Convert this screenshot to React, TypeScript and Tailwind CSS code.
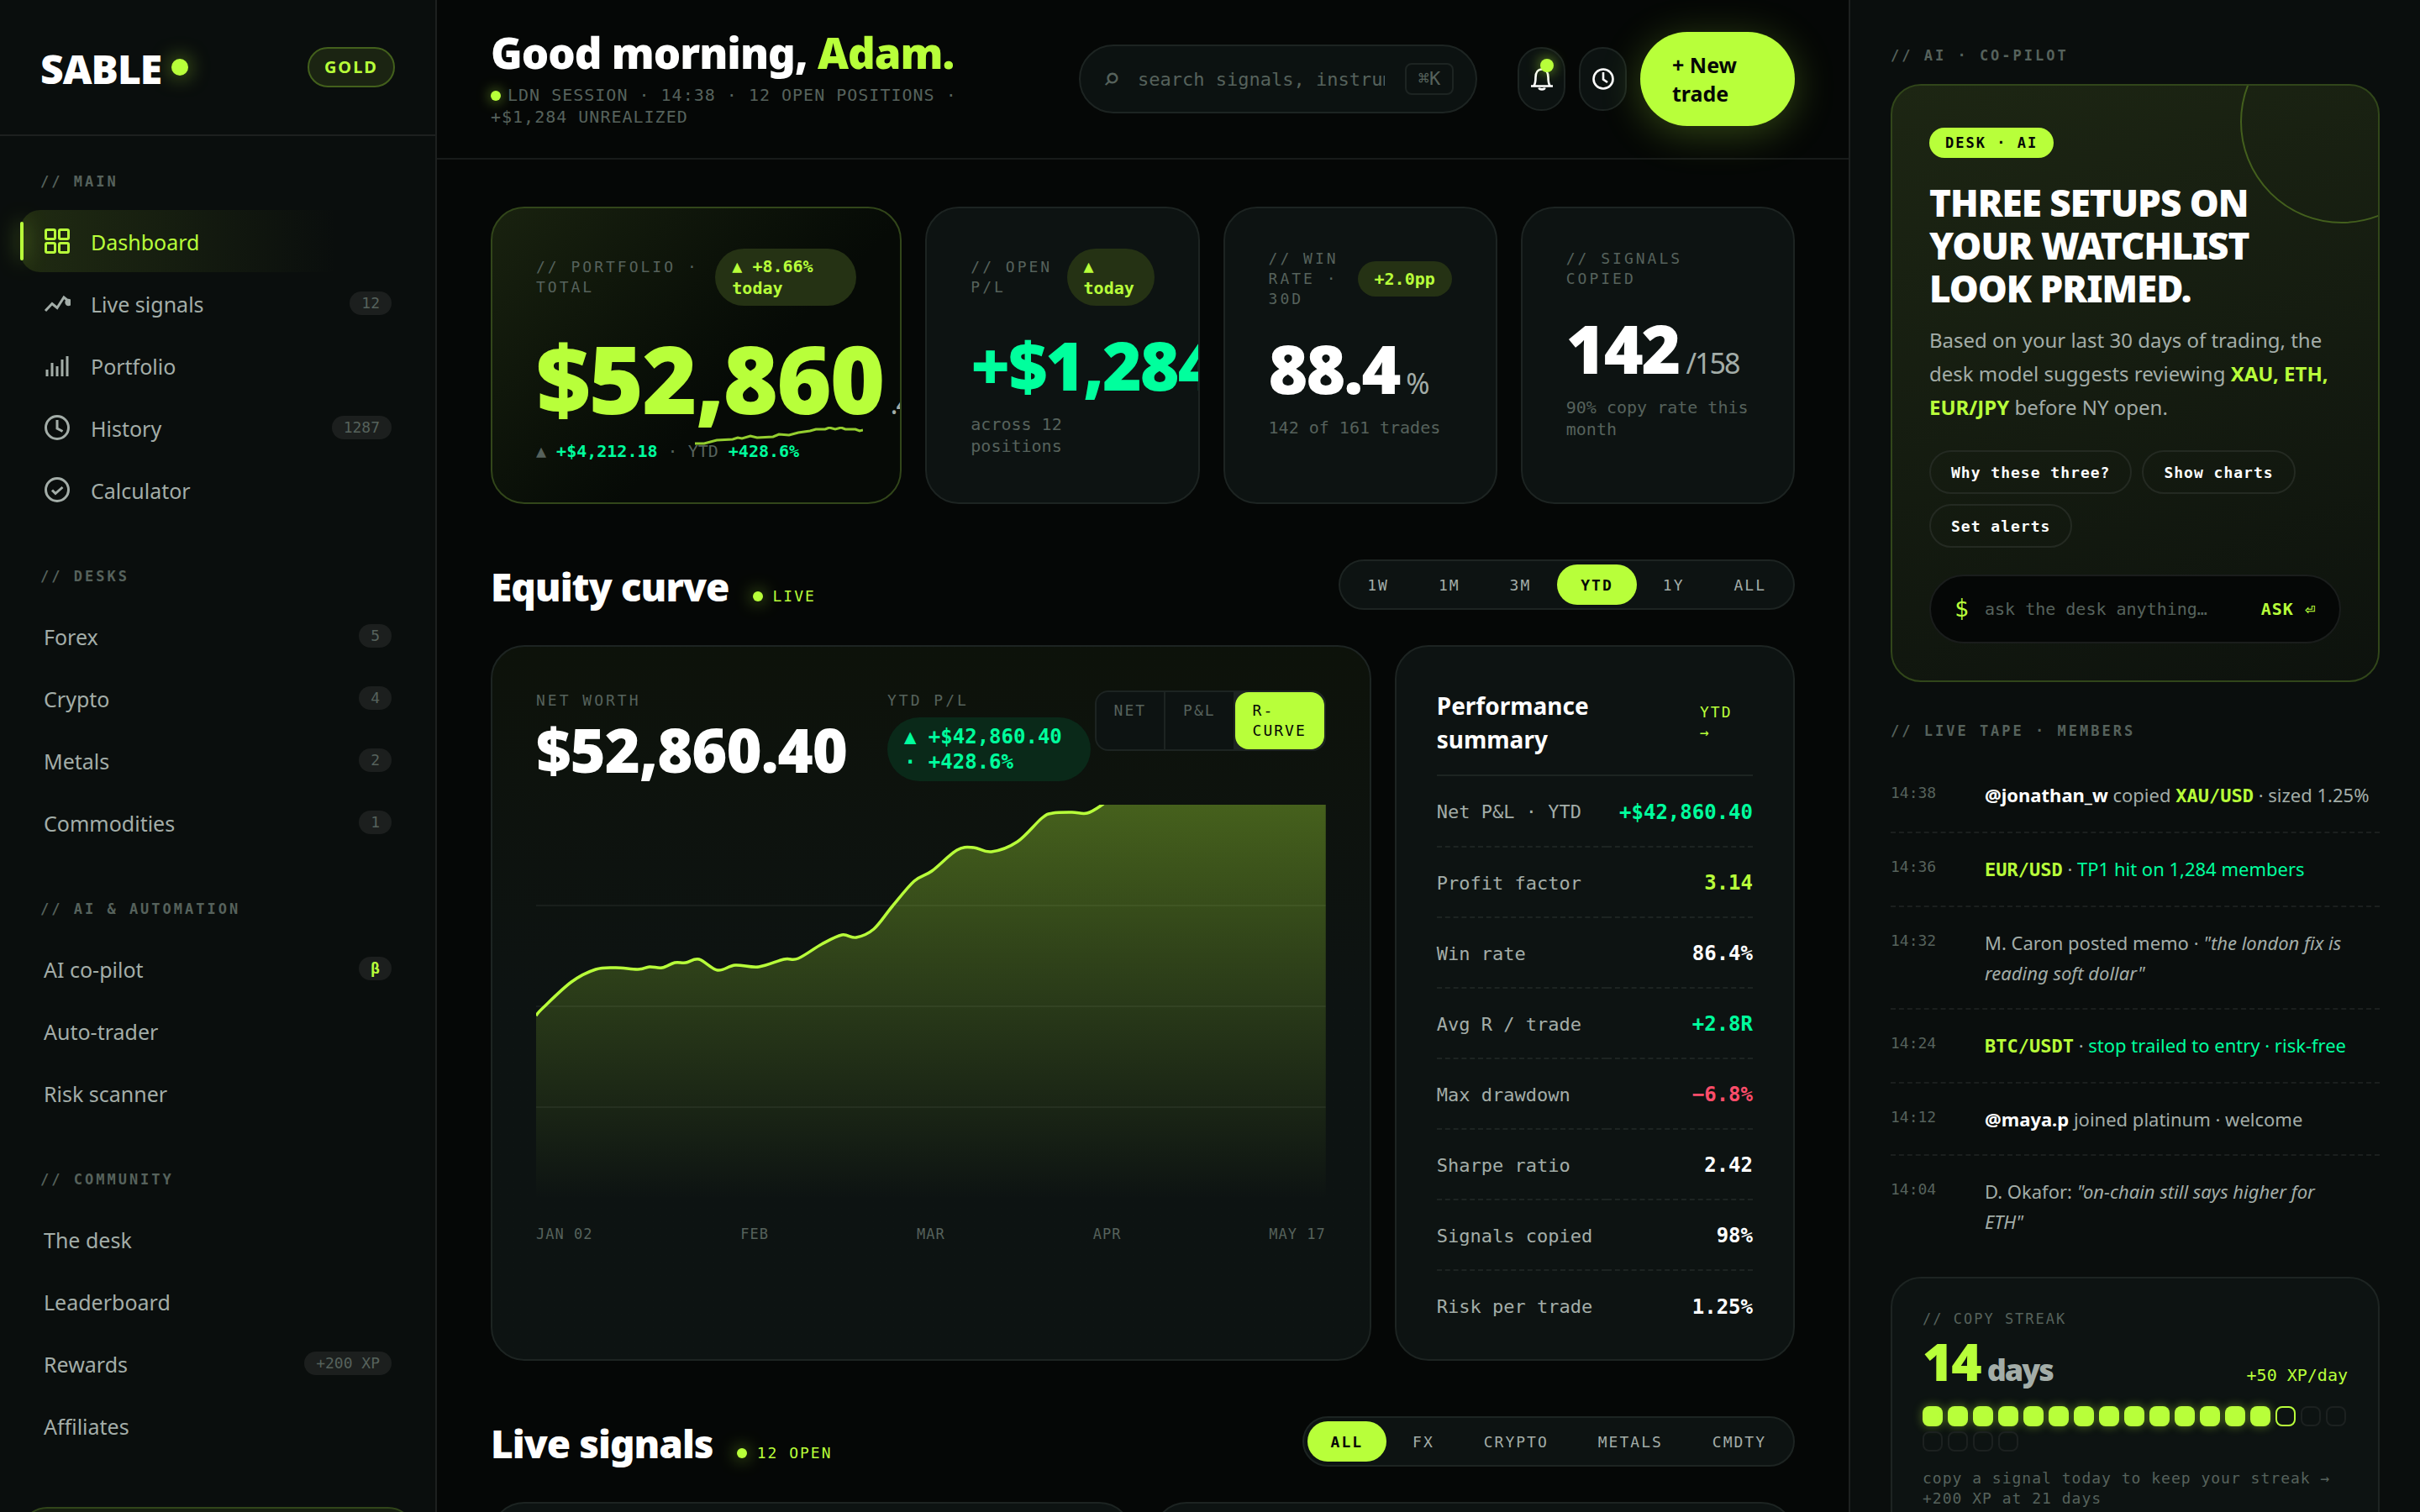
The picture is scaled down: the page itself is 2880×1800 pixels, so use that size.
import React from 'react';

const mono = "font-['DejaVu_Sans_Mono','Liberation_Mono',monospace]";

interface NavItem {
  label: string;
  icon?: React.ReactNode;
  badge?: string;
  badgeLime?: boolean;
  active?: boolean;
}

const iconProps = {
  viewBox: '0 0 32 32',
  fill: 'none',
  stroke: 'currentColor',
  strokeWidth: 3,
  className: 'w-8 h-8 shrink-0',
  'aria-hidden': true,
};

const GridIcon = () => (
  <svg {...iconProps}>
    <rect x="2.5" y="2.5" width="11" height="11" rx="1.5" />
    <rect x="18.5" y="2.5" width="11" height="11" rx="1.5" />
    <rect x="2.5" y="18.5" width="11" height="11" rx="1.5" />
    <rect x="18.5" y="18.5" width="11" height="11" rx="1.5" />
  </svg>
);

const TrendIcon = () => (
  <svg {...iconProps}>
    <path d="M2 25 L10 16.5 L16 21.5 L24 9 L29 13" />
    <circle cx="29.5" cy="15" r="4.2" fill="currentColor" stroke="none" />
  </svg>
);

const BarsIcon = () => (
  <svg {...iconProps}>
    <path d="M4 29V21M10 29V13M16 29V17M22 29V9M28 29V5" />
  </svg>
);

const HistoryIcon = () => (
  <svg {...iconProps}>
    <circle cx="16" cy="16" r="13.5" />
    <path d="M16 7V17L22.5 20.5" />
  </svg>
);

const CheckIcon = () => (
  <svg {...iconProps}>
    <circle cx="16" cy="16" r="13.5" />
    <path d="M10 16.5L14 20.5L22.5 13" />
  </svg>
);

const navGroups: { title: string; items: NavItem[] }[] = [
  {
    title: '// MAIN',
    items: [
      { label: 'Dashboard', icon: <GridIcon />, active: true },
      { label: 'Live signals', icon: <TrendIcon />, badge: '12' },
      { label: 'Portfolio', icon: <BarsIcon /> },
      { label: 'History', icon: <HistoryIcon />, badge: '1287' },
      { label: 'Calculator', icon: <CheckIcon /> },
    ],
  },
  {
    title: '// DESKS',
    items: [
      { label: 'Forex', badge: '5' },
      { label: 'Crypto', badge: '4' },
      { label: 'Metals', badge: '2' },
      { label: 'Commodities', badge: '1' },
    ],
  },
  {
    title: '// AI & AUTOMATION',
    items: [
      { label: 'AI co-pilot', badge: 'β', badgeLime: true },
      { label: 'Auto-trader' },
      { label: 'Risk scanner' },
    ],
  },
  {
    title: '// COMMUNITY',
    items: [
      { label: 'The desk' },
      { label: 'Leaderboard' },
      { label: 'Rewards', badge: '+200 XP' },
      { label: 'Affiliates' },
    ],
  },
];

const Sidebar = () => (
  <aside className="flex flex-col overflow-hidden bg-[#0a0e0d] border-r-2 border-[#1d201f]">
    <div className="flex items-center justify-between px-12 py-14 border-b-2 border-[#1d201f]">
      <a href="#" className="flex items-center gap-3 h-12">
        <span className="pt-1 text-[48px] leading-[48px] font-black tracking-[-1px] text-white">SABLE</span>
        <span className="w-5 h-5 rounded-full bg-[#b8ff3a] shadow-[0_0_24px_rgba(184,255,58,0.6)]" />
      </a>
      <span className="px-[18px] h-12 flex items-center rounded-full border-2 border-[#43601c] bg-[#1b2412] text-[#b8ff3a] text-[20px] font-bold tracking-[2px]">
        GOLD
      </span>
    </div>
    <nav className="px-6 pt-10">
      {navGroups.map((group) => (
        <div key={group.title} className="mb-[52px]">
          <h2 className={`${mono} pl-6 mb-5 text-[17px] leading-7 font-bold tracking-[3px] text-[#56625c]`}>
            {group.title}
          </h2>
          <ul>
            {group.items.map((item) => (
              <li key={item.label}>
                <a
                  href="#"
                  className={`relative flex items-center gap-6 h-[74px] px-7 rounded-[24px] text-[25px] ${
                    item.active
                      ? 'text-[#b8ff3a] bg-linear-to-r from-[#202b12] to-transparent to-80%'
                      : 'text-[#a3ada8]'
                  }`}
                >
                  {item.active && (
                    <span className="absolute left-0 top-[14px] bottom-[14px] w-1 rounded-sm bg-[#b8ff3a] shadow-[0_0_24px_rgba(184,255,58,0.7)]" />
                  )}
                  {item.icon}
                  <span className="pt-1">{item.label}</span>
                  {item.badge && (
                    <span
                      className={`${mono} ml-auto px-[14px] rounded-full bg-[#1c1f1e] text-[18px] leading-7 ${
                        item.badgeLime ? 'text-[#b8ff3a] font-bold' : 'text-[#56625c]'
                      }`}
                    >
                      {item.badge}
                    </span>
                  )}
                </a>
              </li>
            ))}
          </ul>
        </div>
      ))}
    </nav>
    <div className="mx-6 mt-2 h-60 shrink-0 rounded-[32px] border-2 border-[#31461a] bg-[#161e10]" />
  </aside>
);

const TopBar = () => (
  <header className="flex items-center px-16 h-[190px] border-b-2 border-[#181b1a]">
    <div className="w-[600px] shrink-0">
      <h1 className="text-[51px] leading-[52px] font-black tracking-[-1px] text-white whitespace-nowrap">
        Good morning, <span className="text-[#b8ff3a]">Adam.</span>
      </h1>
      <p className={`${mono} mt-3 w-[560px] text-[20px] leading-[26px] tracking-[1px] text-[#56625c]`}>
        <span className="inline-block w-3 h-3 mr-2 rounded-full bg-[#b8ff3a] shadow-[0_0_16px_rgba(184,255,58,0.7)]" />
        LDN SESSION · 14:38 · 12 OPEN POSITIONS · +$1,284 UNREALIZED
      </p>
    </div>
    <label className="ml-auto flex items-center w-[474px] h-[82px] px-[26px] rounded-full border-2 border-[#1d2422] bg-[#0c1211] text-[#56625c]">
      <span className={`${mono} w-[42px] text-[36px] leading-none`}>⌕</span>
      <input
        type="text"
        aria-label="Search"
        placeholder="search signals, instruments…"
        className={`${mono} flex-1 min-w-0 mr-6 bg-transparent outline-none text-[22px] placeholder:text-[#56625c]`}
      />
      <kbd className={`${mono} w-[58px] text-center rounded-lg border-2 border-[#1d2422] text-[22px] leading-[34px]`}>
        ⌘K
      </kbd>
    </label>
    <div className="ml-12 flex items-center gap-4">
      <button
        aria-label="Notifications"
        className="relative w-[57px] h-[76px] flex items-center justify-center rounded-[28px] border-2 border-[#1d2422] bg-[#0c1211] text-white"
      >
        <svg viewBox="0 0 28 28" fill="none" stroke="currentColor" strokeWidth="2.6" className="w-7 h-7">
          <path d="M1 22.5H27M4.5 22C6.5 19 6.5 17 6.5 12C6.5 6 9.5 2.5 14 2.5S21.5 6 21.5 12C21.5 17 21.5 19 23.5 22" />
          <path d="M10.5 24.5C11 27 17 27 17.5 24.5" />
        </svg>
        <span className="absolute top-3 right-3 w-4 h-4 rounded-full bg-[#b8ff3a] shadow-[0_0_16px_rgba(184,255,58,0.7)]" />
      </button>
      <button
        aria-label="Recent"
        className="w-[57px] h-[76px] flex items-center justify-center rounded-[28px] border-2 border-[#1d2422] bg-[#0c1211] text-white"
      >
        <svg viewBox="0 0 28 28" fill="none" stroke="currentColor" strokeWidth="2.6" className="w-7 h-7">
          <circle cx="14" cy="14" r="11.5" />
          <path d="M14 6V14.5L19 18" />
        </svg>
      </button>
      <button className="w-[184px] px-[38px] py-[22px] rounded-[56px] bg-[#b8ff3a] text-[#050706] text-left text-[25px] leading-[34px] font-bold shadow-[0_8px_48px_rgba(184,255,58,0.25)]">
        + New trade
      </button>
    </div>
  </header>
);

interface KpiCardProps {
  label: string;
  pill?: string;
  pillClass?: string;
  hero?: boolean;
  value: React.ReactNode;
  children: React.ReactNode;
}

const KpiCard: React.FC<KpiCardProps> = ({ label, pill, pillClass = '', hero, value, children }) => (
  <article
    className={`relative h-[354px] px-[52px] py-12 overflow-hidden rounded-[40px] border-2 ${
      hero
        ? 'border-[#32461a] bg-linear-135 from-[#19220f] to-[#060a06] to-60%'
        : 'border-[#1d2422] bg-[#0d1312]'
    }`}
  >
    {hero && (
      <svg viewBox="0 0 200 24" className="absolute right-11 bottom-[66px] w-[200px] h-6" fill="none">
        <polyline
          points="0,20 11,20 26,16 45,15 51,13 56,14 66,11 74,13 93,12 100,9 112,10 123,7 137,5 144,3 155,3 160,1 167,3 174,1 179,3 191,3 196,5 200,4"
          stroke="#b8ff3a"
          strokeOpacity="0.8"
          strokeWidth="3"
        />
      </svg>
    )}
    <div className="flex items-center justify-between">
      <h2 className={`${mono} text-[18px] leading-6 tracking-[3px] text-[#56625c]`}>{label}</h2>
      {pill && (
        <span
          className={`${mono} shrink-0 px-5 py-2 rounded-[34px] bg-[#253214] text-[#b8ff3a] text-[20px] leading-[26px] font-bold ${pillClass}`}
        >
          {pill}
        </span>
      )}
    </div>
    {value}
    <p className={`${mono} mt-4 text-[20px] leading-[26px] text-[#56625c]`}>{children}</p>
  </article>
);

const kpiValue = 'mt-7 text-[80px] leading-[84px] font-black tracking-[-2px] whitespace-nowrap';
const kpiUnit = 'ml-2 text-[34px] leading-none font-normal tracking-[-2px] text-[#a3ada8]';

const Kpis = () => (
  <section className="grid grid-cols-[3fr_2fr_2fr_2fr] gap-7">
    <KpiCard
      hero
      label="// PORTFOLIO · TOTAL"
      pill="▲ +8.66% today"
      pillClass="w-[168px]"
      value={
        <div className="mt-7 text-[112px] leading-[116px] font-black tracking-[-2px] text-[#b8ff3a] whitespace-nowrap">
          $52,860<span className={kpiUnit}>.40</span>
        </div>
      }
    >
      ▲ <b className="text-[#00ff9d]">+$4,212.18</b> · YTD <b className="text-[#00ff9d]">+428.6%</b>
    </KpiCard>
    <KpiCard
      label="// OPEN P/L"
      pill="▲ today"
      pillClass="w-[104px]"
      value={<div className={`${kpiValue} text-[#00ff9d]`}>+$1,284</div>}
    >
      across 12 positions
    </KpiCard>
    <KpiCard
      label="// WIN RATE · 30D"
      pill="+2.0pp"
      value={
        <div className={`${kpiValue} text-white`}>
          88.4<span className={kpiUnit}>%</span>
        </div>
      }
    >
      142 of 161 trades
    </KpiCard>
    <KpiCard
      label="// SIGNALS COPIED"
      value={
        <div className={`${kpiValue} text-white`}>
          142<span className={kpiUnit}>/158</span>
        </div>
      }
    >
      90% copy rate this month
    </KpiCard>
  </section>
);

interface SectionHeadProps {
  title: string;
  tag: string;
  options: string[];
  active: string;
}

const SectionHead: React.FC<SectionHeadProps> = ({ title, tag, options, active }) => (
  <div className="mt-16 mb-10 h-16 flex items-center justify-between">
    <div className="flex items-baseline gap-7 pt-1">
      <h2 className="text-[46px] leading-[64px] font-black tracking-[-1px] text-white">{title}</h2>
      <span className={`${mono} flex items-center gap-3 text-[18px] leading-6 tracking-[2px] text-[#b8ff3a]`}>
        <span className="w-3 h-3 rounded-full bg-[#b8ff3a] shadow-[0_0_20px_rgba(184,255,58,0.7)]" />
        {tag}
      </span>
    </div>
    <div className="flex gap-[3px] p-1 rounded-full border-2 border-[#1d2422] bg-[#0d1312]">
      {options.map((option) => (
        <button
          key={option}
          className={`${mono} h-12 px-7 rounded-full text-[18px] tracking-[2px] ${
            option === active ? 'bg-[#b8ff3a] text-[#050706] font-bold' : 'text-[#a3ada8]'
          }`}
        >
          {option}
        </button>
      ))}
    </div>
  </div>
);

const curve: [number, number][] = [
  [0, 251], [8, 242], [42, 211], [71, 196], [95, 194], [121, 196], [135, 193], [150, 194], [165, 188],
  [178, 188], [194, 184], [216, 197], [237, 191], [265, 193], [295, 184], [312, 183], [340, 166],
  [364, 155], [381, 158], [402, 148], [424, 121], [450, 91], [471, 79], [501, 54], [521, 51], [542, 56],
  [573, 44], [602, 16], [615, 10], [638, 9], [656, 10], [674, 0], [700, -20], [940, -160],
];

// Catmull-Rom through the points, written as cubic segments
const toPath = (pts: [number, number][]) =>
  pts.slice(1).reduce((d, p, i) => {
    const a = pts[Math.max(i - 1, 0)];
    const b = pts[i];
    const c = pts[Math.min(i + 2, pts.length - 1)];
    return `${d} C${b[0] + (p[0] - a[0]) / 6} ${b[1] + (p[1] - a[1]) / 6} ${p[0] - (c[0] - b[0]) / 6} ${
      p[1] - (c[1] - b[1]) / 6
    } ${p[0]} ${p[1]}`;
  }, `M${pts[0][0]} ${pts[0][1]}`);

const EquityCard = () => {
  const line = toPath(curve);

  return (
    <article className="px-[52px] pt-[52px] rounded-[40px] border-2 border-[#1d2422] bg-linear-to-b from-[#0d120a] to-[#0d1312] to-50%">
      <div className="flex items-start justify-between">
        <div className="flex gap-12">
          <div>
            <h3 className={`${mono} text-[18px] leading-6 tracking-[3px] text-[#56625c]`}>NET WORTH</h3>
            <div className="mt-2 text-[72px] leading-[76px] font-black tracking-[-1px] text-white">$52,860.40</div>
          </div>
          <div>
            <h3 className={`${mono} text-[18px] leading-6 tracking-[3px] text-[#56625c]`}>YTD P/L</h3>
            <div
              className={`${mono} mt-2 w-[242px] px-5 py-2 rounded-[38px] bg-[#0a2919] text-[#00ff9d] text-[24px] leading-[30px] font-bold`}
            >
              ▲ +$42,860.40 · +428.6%
            </div>
          </div>
        </div>
        <div className="flex gap-[2px] overflow-hidden rounded-[16px] border-2 border-[#1d2422] bg-[#1d2422]">
          {['NET', 'P&L', 'R-CURVE'].map((tab) => (
            <button
              key={tab}
              className={`${mono} w-min flex items-start px-[21px] py-[10px] text-left text-[18px] leading-6 tracking-[2px] ${
                tab === 'R-CURVE' ? 'rounded-[16px] bg-[#b8ff3a] text-[#050706]' : 'bg-[#0d1312] text-[#56625c]'
              }`}
            >
              {tab}
            </button>
          ))}
        </div>
      </div>
      <svg viewBox="0 0 940 480" preserveAspectRatio="none" className="block mt-7 w-full h-[480px]">
        <defs>
          <linearGradient id="equity-fill" gradientUnits="userSpaceOnUse" x1="0" y1="0" x2="0" y2="470">
            <stop offset="0" stopColor="#b8ff3a" stopOpacity="0.33" />
            <stop offset="1" stopColor="#b8ff3a" stopOpacity="0" />
          </linearGradient>
        </defs>
        <path d="M0 120H940M0 240H940M0 360H940" stroke="#ffffff" strokeOpacity="0.05" strokeWidth="2" />
        <path d={`${line} V480 H0 Z`} fill="url(#equity-fill)" />
        <path d={line} fill="none" stroke="#b8ff3a" strokeWidth="3.5" />
      </svg>
      <div className={`${mono} mt-5 flex justify-between text-[17px] leading-[22px] tracking-[1px] text-[#56625c]`}>
        <span>JAN 02</span>
        <span>FEB</span>
        <span>MAR</span>
        <span>APR</span>
        <span>MAY 17</span>
      </div>
    </article>
  );
};

const stats = [
  { label: 'Net P&L · YTD', value: '+$42,860.40', color: 'text-[#00ff9d]' },
  { label: 'Profit factor', value: '3.14', color: 'text-[#b8ff3a]' },
  { label: 'Win rate', value: '86.4%', color: 'text-white' },
  { label: 'Avg R / trade', value: '+2.8R', color: 'text-[#00ff9d]' },
  { label: 'Max drawdown', value: '−6.8%', color: 'text-[#ff4d6a]' },
  { label: 'Sharpe ratio', value: '2.42', color: 'text-white' },
  { label: 'Signals copied', value: '98%', color: 'text-white' },
  { label: 'Risk per trade', value: '1.25%', color: 'text-white' },
];

const SummaryCard = () => (
  <article className="px-12 pt-[50px] pb-[22px] rounded-[40px] border-2 border-[#1d2422] bg-[#0d1312]">
    <div className="flex items-center justify-between pb-[22px] border-b-2 border-[#1d2422]">
      <h3 className="w-60 text-[28px] leading-10 font-bold text-white">Performance summary</h3>
      <a href="#" className={`${mono} w-[63px] text-[18px] leading-6 tracking-[2px] text-[#b8ff3a]`}>
        YTD →
      </a>
    </div>
    <table className={`${mono} w-full`}>
      <tbody>
        {stats.map((row) => (
          <tr key={row.label} className="h-[84px] border-b-2 border-dashed border-[#1d2422] last:border-b-0">
            <th scope="row" className="pt-[2px] text-left text-[22px] font-normal text-[#a3ada8]">
              {row.label}
            </th>
            <td className={`pt-[2px] text-right text-[24px] font-bold ${row.color}`}>{row.value}</td>
          </tr>
        ))}
      </tbody>
    </table>
  </article>
);

const pair = `${mono} text-[22px] font-bold text-[#b8ff3a]`;

const tape: { time: string; body: React.ReactNode }[] = [
  {
    time: '14:38',
    body: (
      <>
        <b className="text-white">@jonathan_w</b> copied <span className={pair}>XAU/USD</span> · sized 1.25%
      </>
    ),
  },
  {
    time: '14:36',
    body: (
      <>
        <span className={pair}>EUR/USD</span> · <span className="text-[#00ff9d]">TP1 hit on 1,284 members</span>
      </>
    ),
  },
  {
    time: '14:32',
    body: (
      <>
        M. Caron posted memo · <em>"the london fix is reading soft dollar"</em>
      </>
    ),
  },
  {
    time: '14:24',
    body: (
      <>
        <span className={pair}>BTC/USDT</span> ·{' '}
        <span className="text-[#00ff9d]">stop trailed to entry · risk-free</span>
      </>
    ),
  },
  {
    time: '14:12',
    body: (
      <>
        <b className="text-white">@maya.p</b> joined platinum · welcome
      </>
    ),
  },
  {
    time: '14:04',
    body: (
      <>
        D. Okafor: <em>"on-chain still says higher for<br />ETH"</em>
      </>
    ),
  },
];

const railLabel = `${mono} mb-5 text-[17px] leading-7 font-bold tracking-[3px] text-[#56625c]`;

const CoPilot = () => (
  <section className="relative overflow-hidden px-11 pt-[50px] pb-11 rounded-[36px] border-2 border-[#31461a] bg-linear-160 from-[#1d2613] to-[#0d120d]">
    <span className="absolute -top-[78px] -right-[78px] w-[242px] h-[242px] rounded-full border-2 border-[#435f1d]" />
    <span
      className={`${mono} inline-block px-[19px] rounded-full bg-[#b8ff3a] text-[17px] leading-9 font-bold tracking-[2px] text-[#050706]`}
    >
      DESK · AI
    </span>
    <h2 className="mt-7 text-[44px] leading-[51px] font-black tracking-[-1px] text-white">
      THREE SETUPS ON YOUR WATCHLIST LOOK PRIMED.
    </h2>
    <p className="mt-4 text-[24px] leading-10 text-[#a3ada8]">
      Based on your last 30 days of trading, the desk model suggests reviewing{' '}
      <b className="text-[#b8ff3a]">XAU, ETH, EUR/JPY</b> before NY open.
    </p>
    <div className="mt-[31px] flex flex-wrap gap-3">
      {['Why these three?', 'Show charts', 'Set alerts'].map((chip) => (
        <button
          key={chip}
          className={`${mono} h-[52px] px-6 rounded-full border-2 border-[#242a22] text-[18px] font-bold tracking-[1px] text-white`}
        >
          {chip}
        </button>
      ))}
    </div>
    <form className="mt-8 flex items-center h-[82px] px-7 rounded-full border-2 border-[#1a1d1c] bg-[#050706]">
      <span className={`${mono} w-9 text-[28px] text-[#b8ff3a]`}>$</span>
      <input
        type="text"
        aria-label="Ask the desk"
        placeholder="ask the desk anything…"
        className={`${mono} flex-1 min-w-0 bg-transparent outline-none text-[20px] placeholder:text-[#56625c]`}
      />
      <button type="button" className={`${mono} text-[20px] font-bold tracking-[1px] text-[#b8ff3a]`}>
        ASK ⏎
      </button>
    </form>
  </section>
);

const Streak = () => (
  <section className="mt-6 h-[360px] p-9 rounded-[36px] border-2 border-[#1d2422] bg-[#0d1312]">
    <h2 className={`${mono} text-[17px] leading-6 tracking-[2px] text-[#56625c]`}>// COPY STREAK</h2>
    <div className="mt-[2px] flex items-baseline justify-between">
      <div className="text-[62px] leading-[72px] font-black tracking-[-2px] text-[#b8ff3a]">
        14<span className="ml-2 text-[36px] leading-none text-[#a3ada8]">days</span>
      </div>
      <span className={`${mono} text-[20px] text-[#b8ff3a]`}>+50 XP/day</span>
    </div>
    <div className="mt-[18px] flex flex-wrap gap-[6px]">
      {Array.from({ length: 21 }, (_, day) => (
        <span
          key={day}
          className={`w-6 h-6 rounded-[8px] ${
            day < 14
              ? 'bg-[#b8ff3a] shadow-[0_0_12px_rgba(184,255,58,0.4)]'
              : day === 14
                ? 'border-2 border-[#b8ff3a]'
                : 'border-2 border-[#1c2120]'
          }`}
        />
      ))}
    </div>
    <p className={`${mono} mt-5 text-[18px] leading-6 tracking-[1px] text-[#56625c]`}>
      copy a signal today to keep your streak → +200 XP at 21 days
    </p>
  </section>
);

const Rail = () => (
  <aside className="overflow-hidden px-12 pt-[52px] bg-[#0a0e0d] border-l-2 border-[#1d201f]">
    <h2 className={railLabel}>// AI · CO-PILOT</h2>
    <CoPilot />
    <h2 className={`${railLabel} mt-11`}>// LIVE TAPE · MEMBERS</h2>
    <ul>
      {tape.map((entry) => (
        <li
          key={entry.time}
          className="flex py-6 border-b-2 border-dashed border-[#1b1f1e] last:border-b-0"
        >
          <time className={`${mono} w-28 shrink-0 text-[18px] leading-8 text-[#56625c]`}>{entry.time}</time>
          <p className="text-[22px] leading-9 text-[#a3ada8]">{entry.body}</p>
        </li>
      ))}
    </ul>
    <Streak />
  </aside>
);

export default function App() {
  return (
    <div className="grid grid-cols-[520px_minmax(0,1fr)_680px] h-screen overflow-hidden bg-[#050706] font-['Noto_Sans','Open_Sans',sans-serif]">
      <Sidebar />
      <main className="overflow-hidden">
        <TopBar />
        <div className="px-16 pt-14">
          <Kpis />
          <SectionHead
            title="Equity curve"
            tag="LIVE"
            options={['1W', '1M', '3M', 'YTD', '1Y', 'ALL']}
            active="YTD"
          />
          <section className="grid grid-cols-[2.2fr_1fr] gap-7">
            <EquityCard />
            <SummaryCard />
          </section>
          <SectionHead
            title="Live signals"
            tag="12 OPEN"
            options={['ALL', 'FX', 'CRYPTO', 'METALS', 'CMDTY']}
            active="ALL"
          />
          <section className="grid grid-cols-2 gap-6">
            <article className="h-80 rounded-[40px] border-2 border-[#1d2422] bg-[#0d1312]" />
            <article className="h-80 rounded-[40px] border-2 border-[#1d2422] bg-[#0d1312]" />
          </section>
        </div>
      </main>
      <Rail />
    </div>
  );
}
